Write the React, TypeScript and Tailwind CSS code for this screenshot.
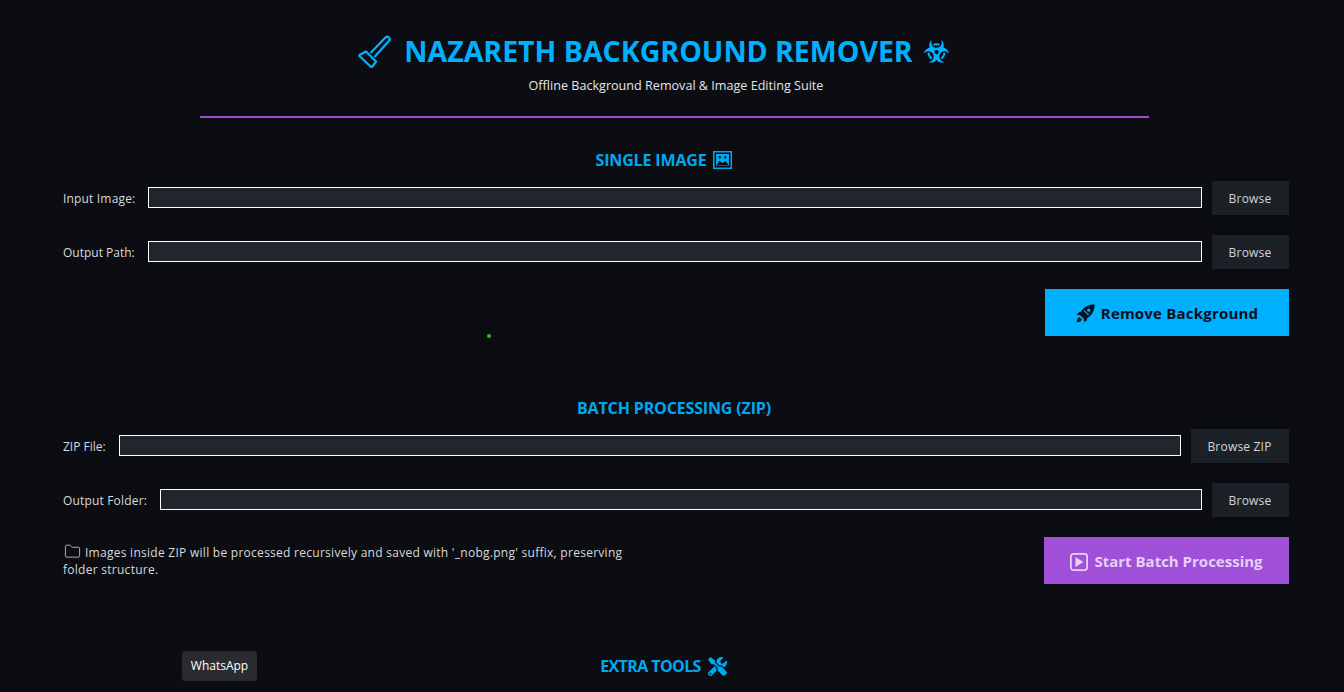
import React from "react";
import { FaBiohazard, FaTools } from "react-icons/fa";
import { Folder } from "lucide-react";

function Plunger() {
  return (
    <svg width="33" height="33" viewBox="0 0 33 33" fill="none" stroke="#00b0ff" strokeWidth="2.3" strokeLinejoin="round" className="shrink-0">
      <path d="M12.5 18 L27.5 2.5 Q29.5 1 31 2.5 Q32.5 4 31 5.8 L16.5 22" />
      <path d="M1.5 20 L8 16.5 L18 26.5 L14.5 31.5 Q13.5 32.5 12.5 31.5 L2 21.5 Q1 20.5 1.5 20 Z" />
    </svg>
  );
}

function FramedPicture() {
  return (
    <svg width="19" height="18" viewBox="0 0 19 18" className="shrink-0">
      <rect x="0" y="0" width="19" height="18" fill="#00a8ee" />
      <rect x="1.5" y="1.5" width="16" height="15" fill="#0b0d12" />
      <rect x="3" y="3" width="13" height="12" fill="#00a8ee" />
      <circle cx="6.8" cy="6.2" r="1.2" fill="#0b0d12" />
      <circle cx="12.2" cy="6.2" r="1.2" fill="#0b0d12" />
      <path d="M3 14.5 L6.5 10 L9.5 12 L12.5 10 L16 14.5 Z" fill="#0b0d12" />
    </svg>
  );
}

function Rocket() {
  return (
    <svg width="19" height="19" viewBox="0 0 19 19" className="shrink-0" fill="#05101c">
      <path d="M18.6 0.4 C14 0.2 9.5 2 6.8 5.2 L4.6 8 L3 8.2 L0.8 10.6 L4.2 11.2 L7.8 14.8 L8.4 18.2 L10.8 16 L11 14.2 L13.8 12.2 C17 9.5 18.8 5 18.6 0.4 Z" />
      <path d="M8 6.4 L12.6 11" stroke="#00b0ff" strokeWidth="1.1" />
      <circle cx="12.8" cy="6.2" r="1.6" fill="#00b0ff" />
      <path d="M3.5 13 C1.8 13.6 1 15.5 0.8 18.2 C3.5 18 5.4 17.2 6 15.5 Z" />
    </svg>
  );
}

function PlayBox() {
  return (
    <svg width="18" height="18" viewBox="0 0 18 18" fill="none" className="shrink-0">
      <rect x="0.9" y="0.9" width="16.2" height="16.2" rx="2.5" stroke="#e6cff5" strokeWidth="1.8" />
      <path d="M5.5 4 L13.5 9 L5.5 14 Z" fill="#e6cff5" />
    </svg>
  );
}

function FieldRow({ label, button, labelClass = "tracking-[0.17px]", btnClass = "w-[77px]" }: { label: string; button: string; labelClass?: string; btnClass?: string }) {
  return (
    <div className="flex items-center h-[34px] gap-[13px]">
      <span className={`pt-[2px] text-[12px] text-[#d8dadd] whitespace-nowrap ${labelClass}`}>{label}</span>
      <div className="flex-1 h-[21px] mb-[1px] bg-[#21262d] border border-white" />
      <button className={`h-[34px] ml-[-3px] pt-[2px] pr-[1px] bg-[#1c2128] text-[12px] tracking-[0.2px] text-[#d1d5da] ${btnClass}`}>{button}</button>
    </div>
  );
}

export default function App() {
  return (
    <div className="relative h-[692px] overflow-hidden bg-[#0b0d12] pl-[63px] pr-[55px] font-['Open_Sans','Noto_Sans',sans-serif]">
      <header className="flex flex-col items-center pt-[31px]">
        <div className="flex items-center h-[40px] ml-[-45px]">
          <Plunger />
          <h1 className="ml-[13px] text-[28.5px] leading-[40px] font-bold text-[#00b0ff] whitespace-nowrap">NAZARETH BACKGROUND REMOVER</h1>
          <FaBiohazard className="ml-[11px] text-[#00b0ff]" size={25} />
        </div>
        <p className="mt-[6px] text-[12.6px] leading-[18px] text-[#e3e5e8]">Offline Background Removal &amp; Image Editing Suite</p>
        <div className="mt-[21px] ml-[-4px] w-[949px] h-[2px] bg-[#9b4dca]" />
      </header>

      <section className="mt-[31px]">
        <h2 className="flex items-center justify-center gap-[6px] ml-[-25px] h-[22px] text-[16px] tracking-[-0.15px] font-bold text-[#00a8ee]">
          SINGLE IMAGE <FramedPicture />
        </h2>
        <div className="mt-[10px] flex flex-col gap-[20px]">
          <FieldRow label="Input Image:" button="Browse" />
          <FieldRow label="Output Path:" button="Browse" labelClass="tracking-[0px]" />
        </div>
        <div className="mt-[20px] flex justify-end">
          <button className="flex items-center justify-center gap-[6px] w-[244px] h-[47px] pt-[2px] bg-[#00b0ff] text-[15px] tracking-[0.2px] font-bold text-[#05101c]">
            <Rocket /> Remove Background
          </button>
        </div>
      </section>

      <section className="mt-[61px]">
        <h2 className="flex items-center justify-center ml-[-4px] h-[22px] text-[16px] tracking-[-0.15px] font-bold text-[#00a8ee]">BATCH PROCESSING (ZIP)</h2>
        <div className="mt-[10px] flex flex-col gap-[20px]">
          <FieldRow label="ZIP File:" button="Browse ZIP" btnClass="w-[98px]" labelClass="tracking-[0px]" />
          <FieldRow label="Output Folder:" button="Browse" />
        </div>
        <div className="mt-[20px] flex justify-between items-center">
          <p className="w-[575px] text-[12px] leading-[17px] tracking-[0.27px] text-[#d8dadd]">
            <Folder className="inline-block mr-[4px] ml-[1px] mt-[-3px] text-[#d8dadd]" size={17} strokeWidth={1.1} />
            Images inside ZIP will be processed recursively and saved with '_nobg.png' suffix, preserving folder structure.
          </p>
          <button className="flex items-center justify-center gap-[6px] w-[245px] h-[47px] pt-[2px] bg-[#a04fd8] text-[15px] font-bold text-[#e6cff5]">
            <PlayBox /> Start Batch Processing
          </button>
        </div>
      </section>

      <section className="mt-[71px]">
        <h2 className="flex items-center justify-center gap-[7px] ml-[-25px] h-[22px] text-[16px] tracking-[-0.6px] font-bold text-[#00a8ee]">
          EXTRA TOOLS <FaTools size={19} />
        </h2>
      </section>

      <span className="absolute left-[487px] top-[334px] w-[4px] h-[4px] rounded-full bg-[#22c80e]" />
      <div className="absolute left-[182px] top-[651px] flex items-center justify-center w-[75px] h-[30px] rounded-[4px] bg-[#2a2b30] text-[12px] text-white">WhatsApp</div>
    </div>
  );
}
